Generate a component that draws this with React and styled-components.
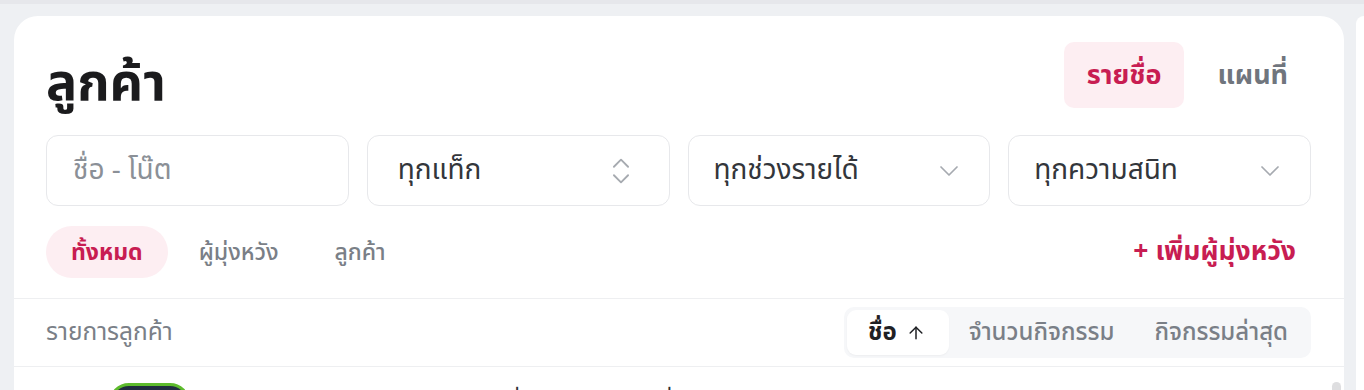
import React from "react";
import styled, { createGlobalStyle } from "styled-components";
import { ChevronDown, ChevronsUpDown, ArrowUp } from "lucide-react";

const GlobalStyle = createGlobalStyle`
  html, body {
    margin: 0;
    padding: 0;
    height: 100%;
    overflow: hidden;
    background: #eef0f3;
    font-family: "Noto Sans", "Noto Sans Thai", sans-serif;
  }
  * { box-sizing: border-box; }
`;

const TopBar = styled.div`
  height: 4px;
  background: #e6e7eb;
`;

const Page = styled.div`
  display: flex;
  gap: 12px;
  padding: 12px 0 0 14px;
`;

const Card = styled.div`
  position: relative;
  flex: 0 0 1330px;
  background: #fff;
  border-radius: 24px 24px 0 0;
  height: 420px;
  display: flex;
  flex-direction: column;
`;

const SidePanel = styled.div`
  flex: 1;
  background: #fff;
  border-radius: 16px 0 0 0;
  height: 420px;
`;

const Header = styled.div`
  display: flex;
  align-items: center;
  justify-content: space-between;
  padding: 26px 33px 0 32px;
`;

const Title = styled.h1`
  margin: 0;
  font-size: 52px;
  font-weight: 700;
  color: #1b1b1d;
  line-height: 1;
  padding-top: 10px;
`;

const ViewToggle = styled.div`
  display: flex;
  gap: 10px;
`;

const ViewButton = styled.button`
  border: 0;
  font-family: inherit;
  font-size: 27px;
  font-weight: 700;
  padding: 0 23px;
  height: 66px;
  border-radius: 10px;
  background: ${(p) => (p.active ? "#fdeef2" : "transparent")};
  color: ${(p) => (p.active ? "#c81d52" : "#70757d")};
`;

const Filters = styled.div`
  display: grid;
  grid-template-columns: repeat(4, 1fr);
  gap: 18px;
  padding: 27px 33px 0 32px;
`;

const Field = styled.div`
  height: 71px;
  border: 1.5px solid #e7e8eb;
  border-radius: 12px;
  display: flex;
  align-items: center;
  justify-content: space-between;
  padding: 0 ${(p) => p.padRight ?? 26}px 0 ${(p) => p.padLeft ?? 26}px;
  font-size: 28px;
  color: ${(p) => (p.placeholder ? "#8b9097" : "#33363b")};
  svg {
    color: #a6aab0;
  }
`;

const Segments = styled.div`
  display: flex;
  align-items: center;
  justify-content: space-between;
  padding: 20px 48px 20px 32px;
`;

const PillGroup = styled.div`
  display: flex;
  gap: 6px;
`;

const Pill = styled.button`
  border: 0;
  font-family: inherit;
  font-size: 23px;
  font-weight: ${(p) => (p.active ? 700 : 500)};
  height: 52px;
  padding: 0 25px;
  border-radius: 26px;
  background: ${(p) => (p.active ? "#fdeef2" : "transparent")};
  color: ${(p) => (p.active ? "#c81d52" : "#7a7f87")};
`;

const AddLink = styled.a`
  font-size: 26.5px;
  font-weight: 700;
  color: #c81d52;
  text-decoration: none;
`;

const ListHeader = styled.div`
  border-top: 1.5px solid #eeeff1;
  border-bottom: 1.5px solid #eeeff1;
  display: flex;
  align-items: center;
  justify-content: space-between;
  padding: 8px 33px 8px 32px;
`;

const ListTitle = styled.span`
  font-size: 24.5px;
  color: #7a7f87;
`;

const SortBar = styled.div`
  display: flex;
  background: #f6f7f9;
  border-radius: 10px;
  padding: 3px;
`;

const SortButton = styled.button`
  border: 0;
  font-family: inherit;
  font-size: 24px;
  height: 45px;
  padding: ${(p) => (p.active ? "0 23px 0 21px" : "0 20px")};
  display: flex;
  align-items: center;
  gap: 9px;
  border-radius: 9px;
  font-weight: ${(p) => (p.active ? 700 : 500)};
  background: ${(p) => (p.active ? "#fff" : "transparent")};
  color: ${(p) => (p.active ? "#1f2024" : "#7a7f87")};
  box-shadow: ${(p) => (p.active ? "0 1px 2px rgba(0,0,0,0.04)" : "none")};
`;

const ListBody = styled.div`
  flex: 1;
  overflow: hidden;
`;

const ScrollThumb = styled.div`
  position: absolute;
  right: 3px;
  top: 366px;
  width: 9px;
  height: 200px;
  border-radius: 5px;
  background: #dedee0;
`;

const Row = styled.div`
  display: grid;
  grid-template-columns: 400px 150px 1fr;
  align-items: start;
  padding: 16px 32px 0 95px;
  height: 110px;
`;

const Avatar = styled.div`
  width: 81px;
  height: 81px;
  border-radius: 20px;
  border: 3px solid #5dbb2c;
  background: linear-gradient(160deg, #1d2a3c, #2c3b4f);
`;

const RowText = styled.div`
  font-size: 22px;
  color: #2c2e33;
  padding-top: 2px;
`;

const rows = [
  { name: "ชื่อ บริษัท ตัวอย่าง", note: "ที่ติดต่อ" },
  { name: "ร้านค้า สมใจ", note: "ผู้มุ่งหวัง" },
];

export default function App() {
  return (
    <>
      <GlobalStyle />
      <TopBar />
      <Page>
        <Card>
          <Header>
            <Title>ลูกค้า</Title>
            <ViewToggle>
              <ViewButton active>รายชื่อ</ViewButton>
              <ViewButton>แผนที่</ViewButton>
            </ViewToggle>
          </Header>
          <Filters>
            <Field placeholder>ชื่อ - โน๊ต</Field>
            <Field padLeft={30} padRight={31}>
              ทุกแท็ก
              <ChevronsUpDown size={34} strokeWidth={1.3} />
            </Field>
            <Field padLeft={25} padRight={24}>
              ทุกช่วงรายได้
              <ChevronDown size={32} strokeWidth={1.3} />
            </Field>
            <Field padLeft={25} padRight={24}>
              ทุกความสนิท
              <ChevronDown size={32} strokeWidth={1.3} />
            </Field>
          </Filters>
          <Segments>
            <PillGroup>
              <Pill active>ทั้งหมด</Pill>
              <Pill>ผู้มุ่งหวัง</Pill>
              <Pill>ลูกค้า</Pill>
            </PillGroup>
            <AddLink href="#">+ เพิ่มผู้มุ่งหวัง</AddLink>
          </Segments>
          <ListHeader>
            <ListTitle>รายการลูกค้า</ListTitle>
            <SortBar>
              <SortButton active>
                ชื่อ <ArrowUp size={20} strokeWidth={1.8} />
              </SortButton>
              <SortButton>จำนวนกิจกรรม</SortButton>
              <SortButton>กิจกรรมล่าสุด</SortButton>
            </SortBar>
          </ListHeader>
          <ListBody>
            {rows.map((r) => (
              <Row key={r.name}>
                <Avatar />
                <RowText>{r.name}</RowText>
                <RowText>{r.note}</RowText>
              </Row>
            ))}
          </ListBody>
          <ScrollThumb />
        </Card>
        <SidePanel />
      </Page>
    </>
  );
}
